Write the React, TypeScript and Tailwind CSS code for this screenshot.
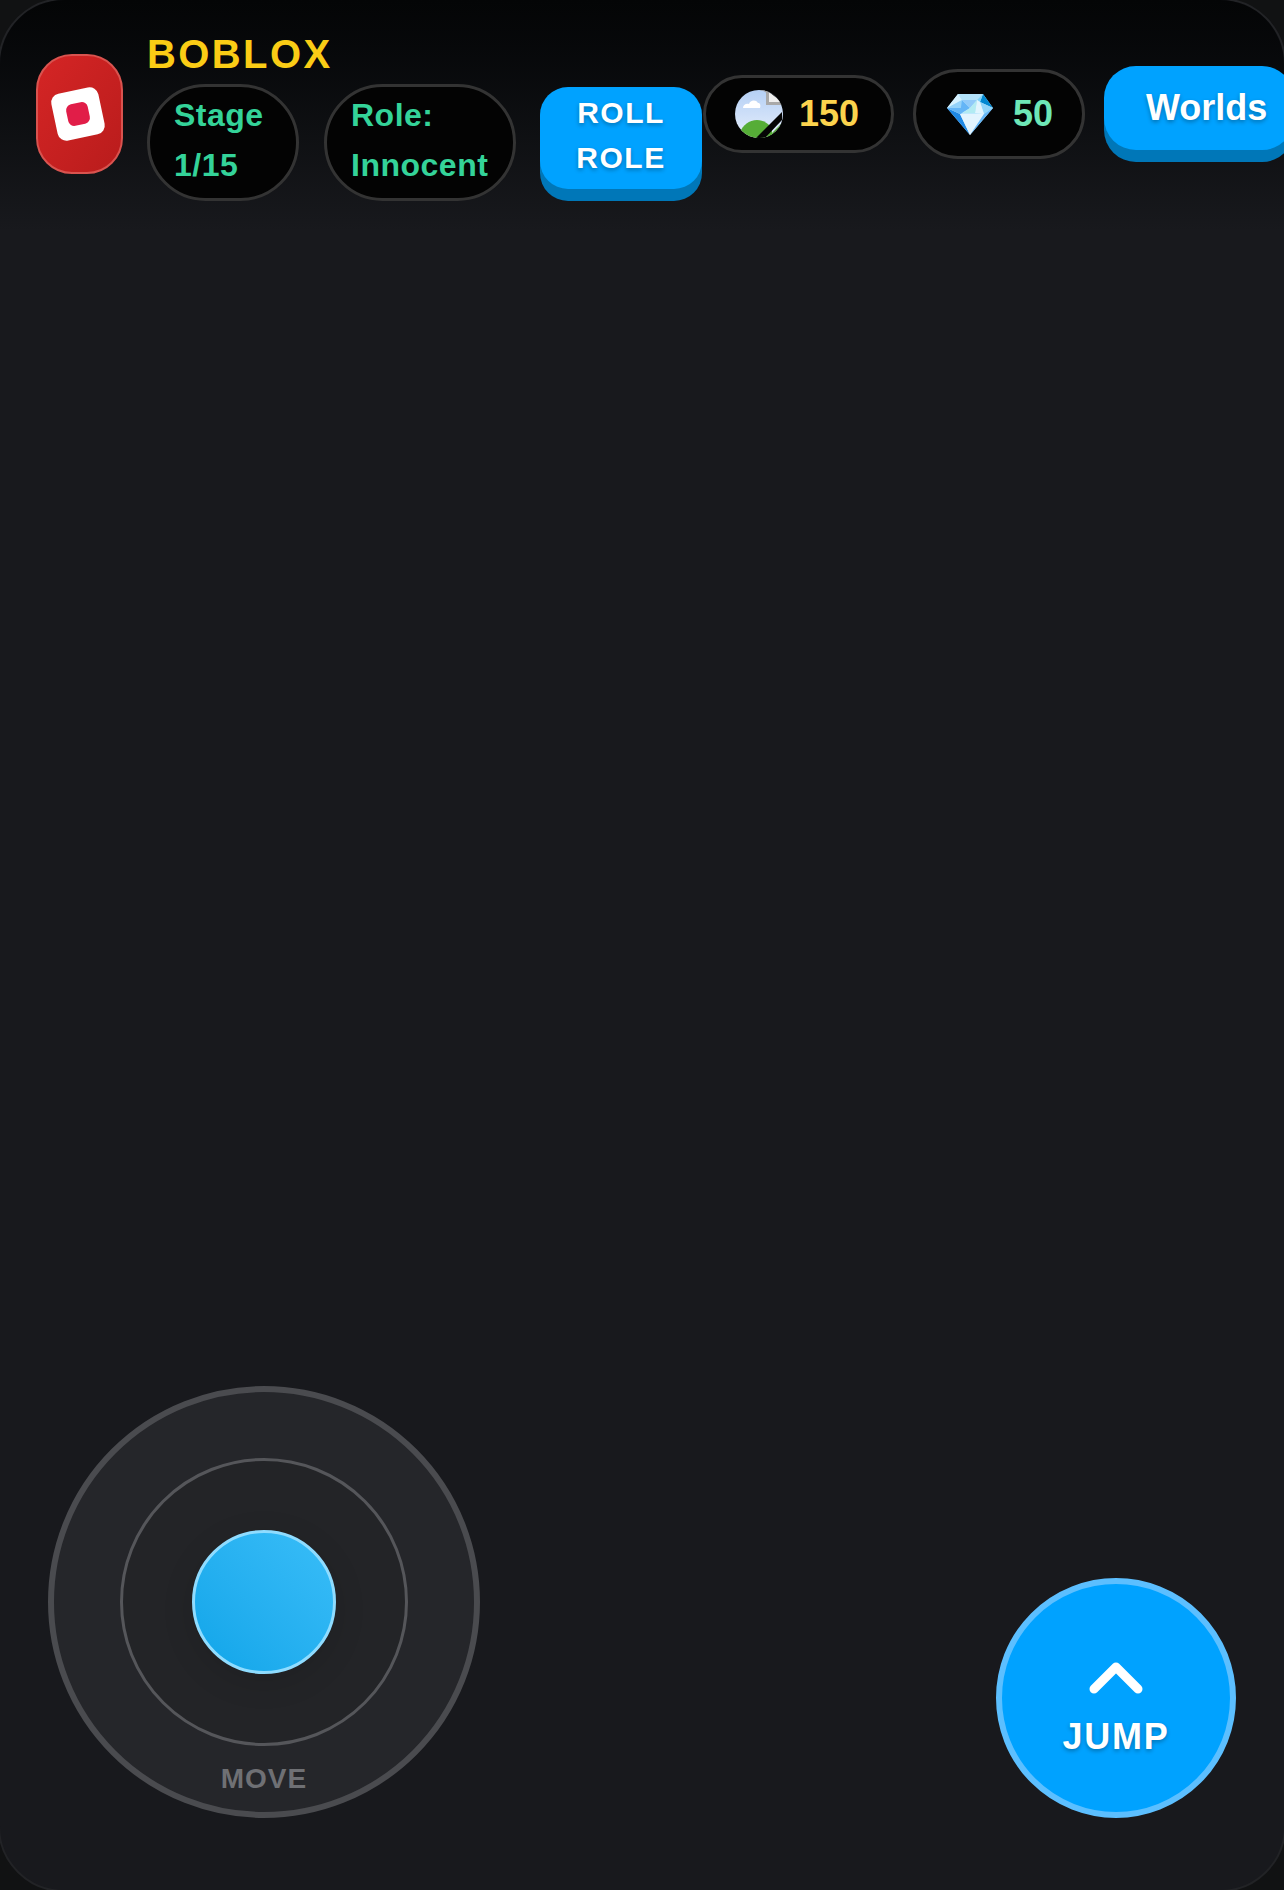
import React from 'react';

function BrokenImageCoin() {
  return (
    <svg width="48" height="48" viewBox="0 0 48 48" className="shrink-0 blur-[0.4px]">
      <defs>
        <clipPath id="coinClip">
          <circle cx="24" cy="24" r="24" />
        </clipPath>
        <linearGradient id="sky" x1="0" y1="0" x2="0" y2="1">
          <stop offset="0" stopColor="#b5d0f5" />
          <stop offset="1" stopColor="#e6eefb" />
        </linearGradient>
      </defs>
      <g clipPath="url(#coinClip)">
        <rect width="48" height="48" fill="url(#sky)" />
        <path d="M8 18c0-3 3-5 6-4 1-4 7-5 9-1 2 0 3 2 2 5z" fill="#fff" />
        <path d="M5 42c3-7 9-12 17-12 6 0 11 3 15 8v10H5z" fill="#56ad37" />
        <path d="M32 48l15-15v15z" fill="#56ad37" />
        <path d="M47 22v8L30 48h-9z" fill="#050505" />
        <path d="M32 0v15h16V0z" fill="#050505" />
        <path d="M31 0h3v12h14v3H31z" fill="#a9a9a9" />
        <path d="M34 2l13 10H34z" fill="#efefef" />
        <path d="M2 36A23 23 0 0 1 32 2" fill="none" stroke="#a4a4a4" strokeWidth="2" />
      </g>
    </svg>
  );
}

function GemIcon() {
  return (
    <svg width="46" height="41" viewBox="0 0 46 41" className="shrink-0">
      <polygon points="11,0 36,0 46,14 23,41 0,14" fill="#bfe8fd" />
      <polygon points="0,14 11,0 15,6" fill="#d5f1fe" />
      <polygon points="11,0 36,0 30,6 15,6" fill="#b3e3fb" />
      <polygon points="0,14 15,6 18,14" fill="#94d2f9" />
      <polygon points="15,6 23,14 13,20" fill="#64b5f6" />
      <polygon points="23,14 15,6 30,6" fill="#90caf9" />
      <polygon points="36,0 46,14 33,8" fill="#0288d1" />
      <polygon points="30,6 36,0 33,8" fill="#81d4fa" />
      <polygon points="33,8 46,14 37,20" fill="#90d5fa" />
      <polygon points="30,6 33,8 37,20 28,19" fill="#e1f5fe" />
      <polygon points="23,14 30,6 28,19 16,19" fill="#b2ebf2" />
      <polygon points="0,14 13,20 23,41" fill="#1e88e5" />
      <polygon points="0,14 13,20 15,19 18,14" fill="#64b5f6" />
      <polygon points="13,20 37,20 23,41" fill="#e3f4fe" />
      <polygon points="37,20 46,14 23,41" fill="#64b5f6" />
    </svg>
  );
}

function Pill({ lines, width }: { lines: string[]; width: string }) {
  return (
    <div
      className={`${width} shrink-0 rounded-full border-[3px] border-[#333333] bg-[#030303] pl-[24px] pt-[3px] pb-[8px] text-[32px] leading-[50px] font-bold tracking-[0.5px] text-[#34d399]`}
    >
      {lines.map((line) => (
        <div key={line}>{line}</div>
      ))}
    </div>
  );
}

export default function App() {
  return (
    <div className="h-[1890px] w-[1284px] overflow-hidden bg-[#111213] font-['Liberation_Sans',sans-serif]">
      {/* frame is 2px bigger on each side so its border only shows at the corners */}
      <div className="-m-[2px] flex h-[1894px] w-[1288px] flex-col justify-between rounded-[66px] border-2 border-[#222326] bg-[#18191d]">
        <header className="flex items-start rounded-t-[64px] bg-gradient-to-b from-[#040506] to-[#18191d] pl-[36px] pt-[30px] pb-[30px]">
          <div className="mt-[24px] flex h-[120px] w-[87px] shrink-0 items-center justify-center rounded-[36px] border-2 border-[#d9534f] bg-gradient-to-br from-[#d52525] to-[#b91c1c]">
            <div className="mr-[3px] flex h-[48px] w-[48px] -rotate-[12deg] items-center justify-center rounded-[9px] bg-white">
              <div className="h-[22px] w-[22px] rounded-[6px] bg-[#e11d48]" />
            </div>
          </div>

          <div className="ml-[24px] shrink-0">
            <div className="h-[54px] text-[40px] leading-[48px] font-bold tracking-[2.4px] text-[#facc15]">BOBLOX</div>
            <div className="flex items-end">
              <Pill lines={['Stage', '1/15']} width="w-[152px]" />
              <div className="ml-[25px]">
                <Pill lines={['Role:', 'Innocent']} width="w-[192px]" />
              </div>
              <button className="mb-3 ml-6 w-[162px] rounded-[28px] bg-[#00a2ff] pt-[3px] pb-[9px] text-[30px] leading-[45px] font-bold tracking-[1.5px] text-white shadow-[0_12px_0_#0077b8] [text-shadow:0_2px_4px_rgba(0,0,0,0.3)]">
                ROLL
                <br />
                ROLE
              </button>
            </div>
          </div>

          <div className="ml-px mt-[45px] flex h-[78px] w-[191px] shrink-0 items-center rounded-full border-[3px] border-[#333333] bg-[#030303] pl-[29px]">
            <BrokenImageCoin />
            <span className="ml-4 text-[36px] font-bold text-[#fcd34d]">150</span>
          </div>

          <div className="ml-[19px] mt-[39px] flex h-[90px] w-[172px] shrink-0 items-center rounded-full border-[3px] border-[#333333] bg-[#030303] pl-[31px]">
            <GemIcon />
            <span className="ml-[20px] text-[36px] font-bold text-[#6ee7b7]">50</span>
          </div>

          <button className="mb-3 ml-[19px] mt-[36px] h-[84px] w-[190px] shrink-0 rounded-[32px] bg-[#00a2ff] pl-[42px] text-left text-[36px] font-bold text-white shadow-[0_12px_0_#0077b8] [text-shadow:0_2px_4px_rgba(0,0,0,0.3)]">
            Worlds
          </button>
        </header>

        <div className="flex items-end justify-between px-[48px] pb-[72px]">
          <div className="relative flex h-[432px] w-[432px] items-center justify-center rounded-full border-[6px] border-[#4a4b4f] bg-[#25262a]">
            <div className="flex h-[288px] w-[288px] items-center justify-center rounded-full border-[3px] border-[#55565a] bg-[#232427]">
              <div className="h-[144px] w-[144px] rounded-full border-[3px] border-[#8fdcff] bg-gradient-to-tr from-[#0ea5e9] to-[#38bdf8] shadow-[0_8px_32px_rgba(0,0,0,0.12)]" />
            </div>
            <span className="absolute bottom-[12px] left-0 w-full text-center text-[28px] font-bold tracking-[1px] text-[#6f7074]">
              MOVE
            </span>
          </div>

          <button className="flex h-[240px] w-[240px] flex-col items-center justify-center rounded-full border-[6px] border-[#5cbfff] bg-[#00a2ff] pt-[21px] text-white">
            <svg width="56" height="36" viewBox="0 0 56 36" className="mb-[21px]">
              <path d="M6 30 L28 8 L50 30" fill="none" stroke="#fff" strokeWidth="9" strokeLinecap="round" strokeLinejoin="round" />
            </svg>
            <span className="text-[36px] leading-[42px] font-bold tracking-[1.8px] [text-shadow:0_2px_4px_rgba(0,0,0,0.3)]">JUMP</span>
          </button>
        </div>
      </div>
    </div>
  );
}
